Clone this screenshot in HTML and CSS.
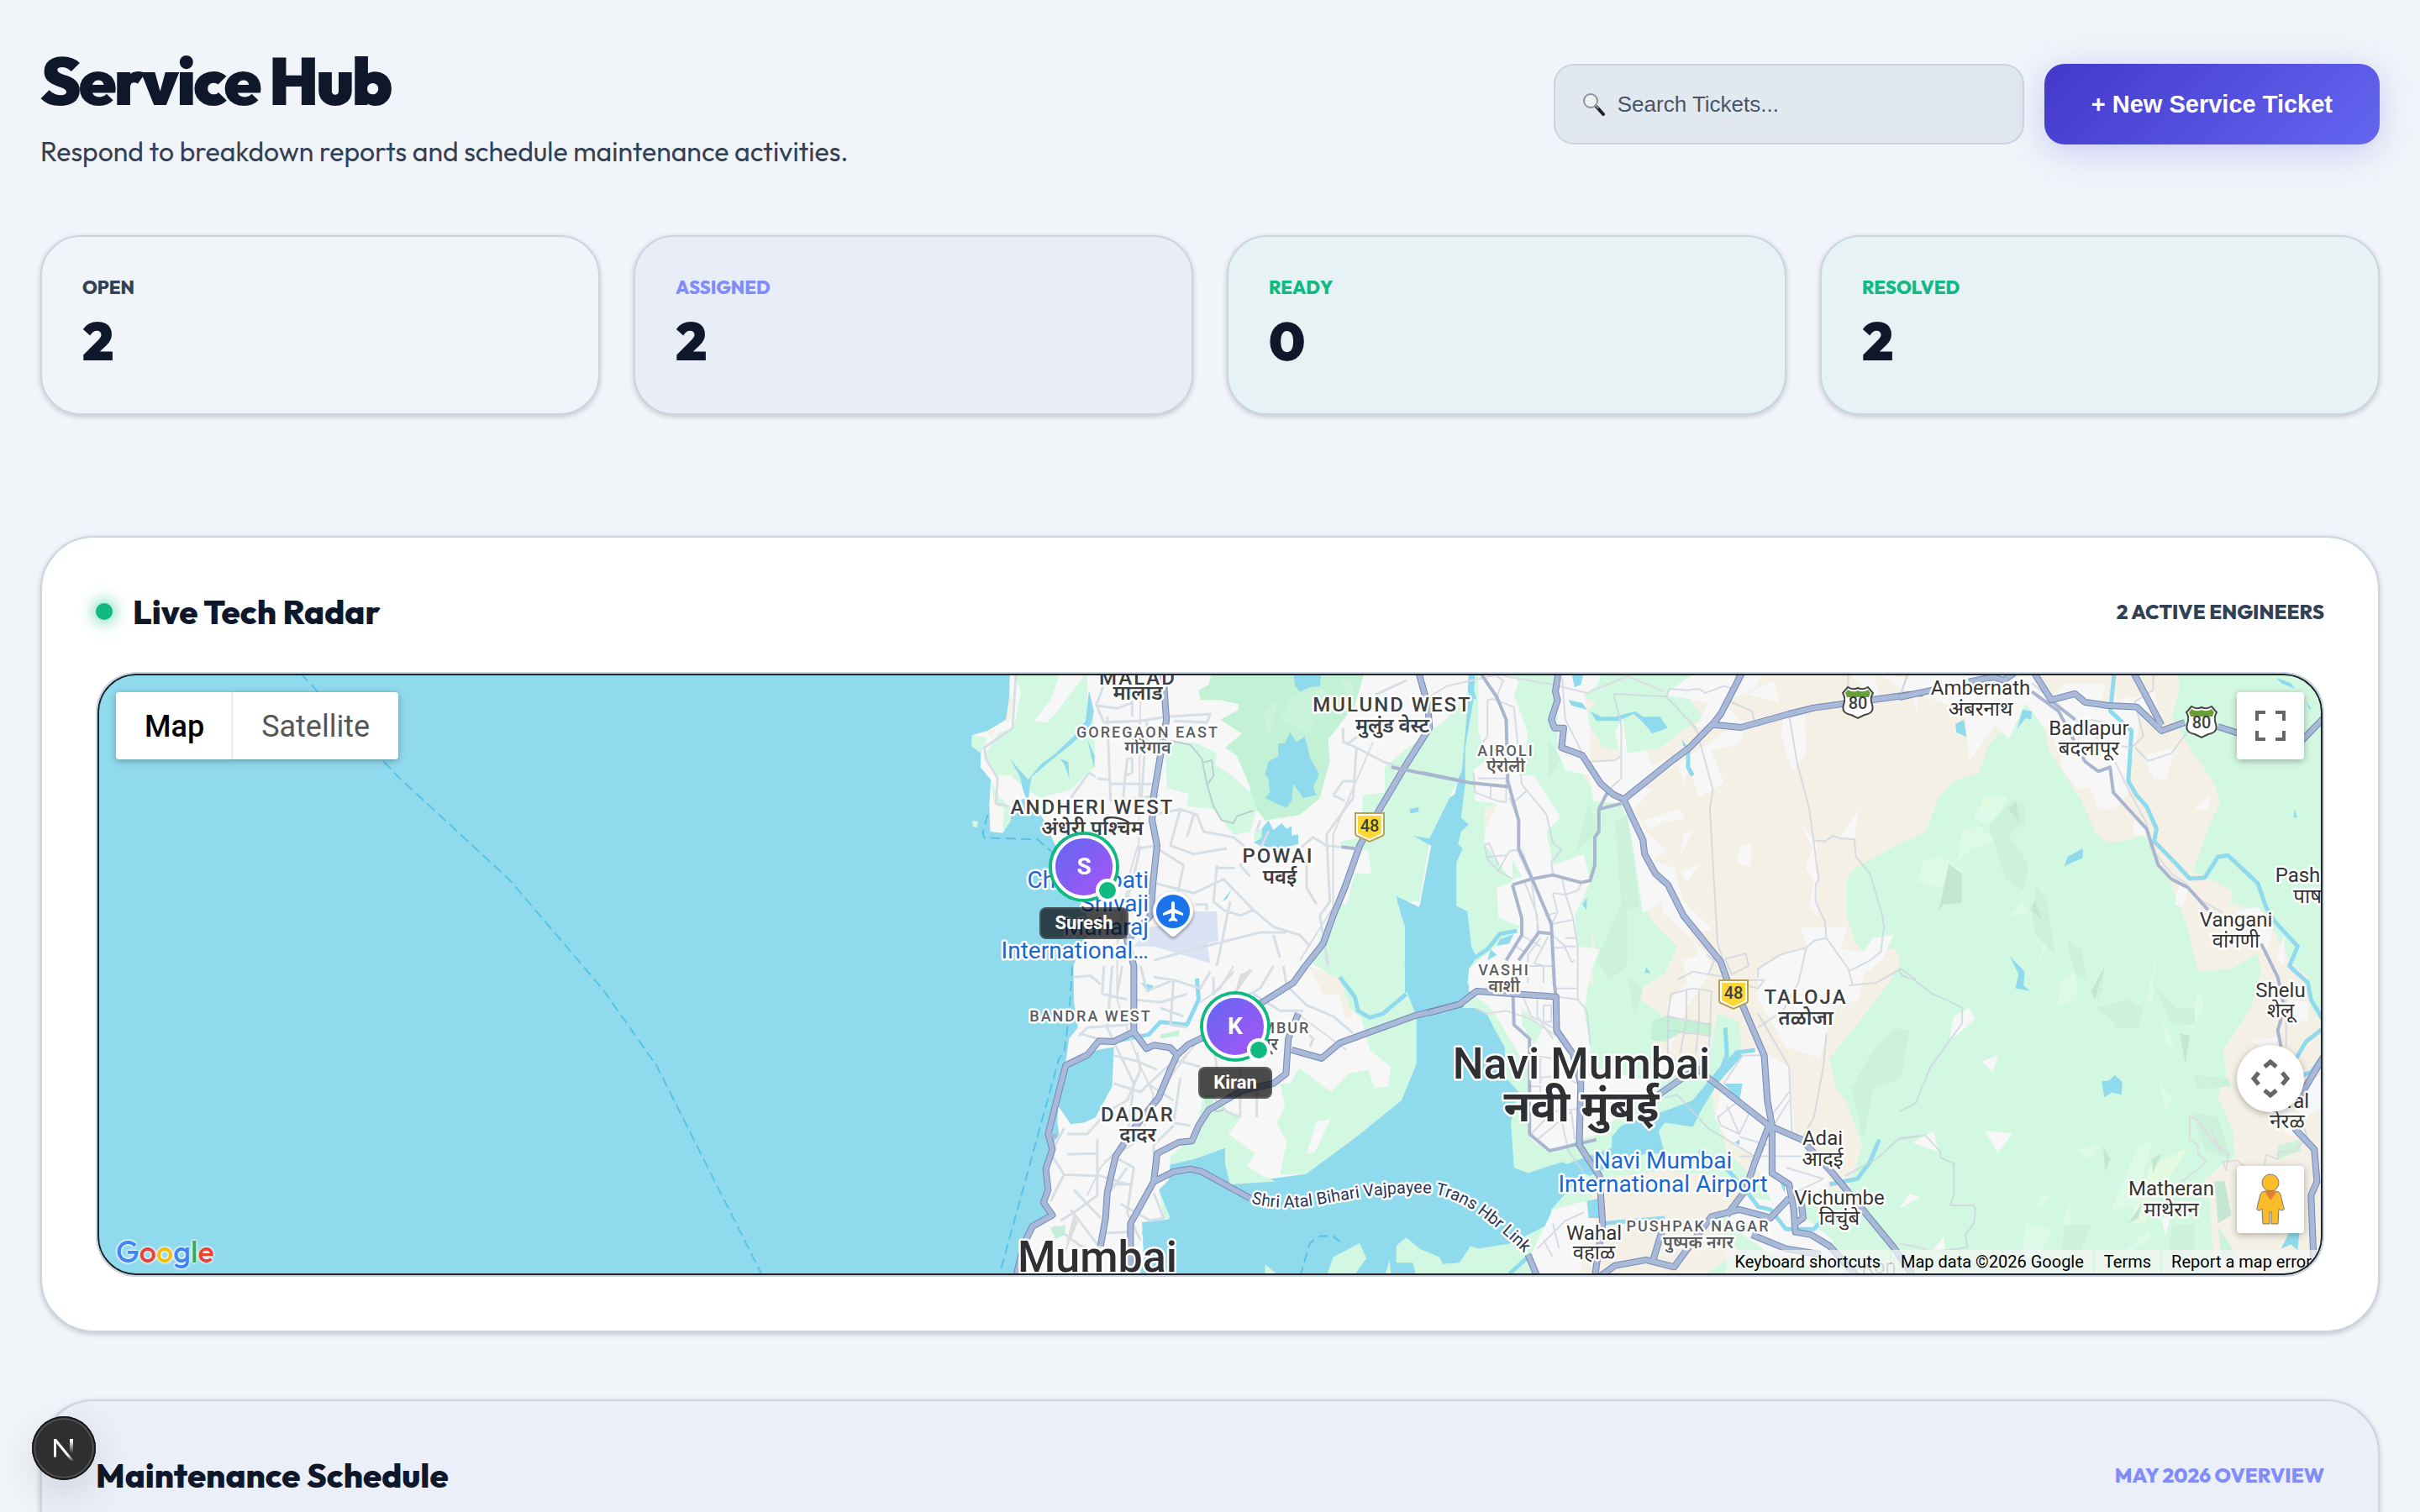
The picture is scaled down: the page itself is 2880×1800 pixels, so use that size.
FILE: index.html
```html
<!DOCTYPE html>
<html lang="en">
<head>
<meta charset="utf-8">
<meta name="viewport" content="width=device-width, initial-scale=1">
<title>Service Hub</title>
<link rel="stylesheet" href="styles.css">
</head>
<body>
<main class="page">
  <header class="page-header">
    <div class="intro">
      <h1 class="page-title">Service Hub</h1>
      <p class="page-subtitle">Respond to breakdown reports and schedule maintenance activities.</p>
    </div>
    <div class="actions">
      <label class="search">
        <svg class="search-icon" viewBox="0 0 28 28" aria-hidden="true">
          <path d="M17 17l8 9" stroke="#222" stroke-width="4" stroke-linecap="round"/>
          <path d="M15 14l4 5" stroke="#9aa3ab" stroke-width="2"/>
          <circle cx="10" cy="10" r="8" fill="#eef0f2" stroke="#8b949c" stroke-width="2"/>
        </svg>
        <input class="search-input" type="text" placeholder="Search Tickets..." aria-label="Search Tickets">
      </label>
      <button class="primary-button" type="button">+ New Service Ticket</button>
    </div>
  </header>

  <section class="stats" aria-label="Ticket totals">
    <article class="stat"><h2 class="stat-label">OPEN</h2><p class="stat-value">2</p></article>
    <article class="stat stat-indigo"><h2 class="stat-label">ASSIGNED</h2><p class="stat-value">2</p></article>
    <article class="stat stat-green"><h2 class="stat-label">READY</h2><p class="stat-value">0</p></article>
    <article class="stat stat-green"><h2 class="stat-label">RESOLVED</h2><p class="stat-value">2</p></article>
  </section>

  <section class="panel">
    <div class="panel-header">
      <h2 class="panel-title"><span class="live-dot"></span>Live Tech Radar</h2>
      <span class="panel-note">2 ACTIVE ENGINEERS</span>
    </div>
    <div class="map">
      <svg class="map-canvas" viewBox="116 802 2648 716" preserveAspectRatio="xMidYMid slice" role="img" aria-label="Map of Mumbai">
        <defs>
          <path id="link-road" d="M1489 1432Q1520 1442 1570 1434Q1640 1420 1690 1420Q1720 1420 1752 1440Q1790 1466 1826 1504"/>
          <g id="shield-nh">
            <path d="M-17-16H17V8Q17 11 13 12L0 18L-13 12Q-17 11-17 8Z" fill="#fff" stroke="#b9a057" stroke-width="2"/>
            <path d="M-14-13H14V8L0 15L-14 8Z" fill="#fdd835"/>
          </g>
          <g id="shield-us">
            <path d="M-12-18Q-6-14 0-17Q6-14 12-18L18-11Q14-5 17 3Q20 13 8 15L0 19L-8 15Q-20 13-17 3Q-14-5-18-11Z" fill="#fff" stroke="#444" stroke-width="2"/>
            <path d="M-12-15Q-6-11 0-14Q6-11 12-15L15-11L13-6H-13L-15-11Z" fill="#689f38"/>
          </g>
        </defs>
        <rect class="water" x="116" y="802" width="2648" height="716"/>
        <path class="ferry" d="M358 802L474 925 606 1047 716 1176 781 1268 907 1518"/>

        <!-- west: Mumbai peninsula -->
        <g transform="matrix(.3954 0 0 .3333 1120 790)">
          <path class="urban" d="M207 30L205 130 195 200 140 240 95 255 92 295 120 320 118 370 150 415 145 500 148 600 185 605 208 560 215 490 270 480 310 560 340 640 370 700 400 800 430 880 450 940 425 1000 398 1080 400 1210 412 1300 385 1340 375 1425 470 1380 520 1370 515 1510 465 1620 430 1640 390 1645 352 1580 350 1640 355 1680 335 1720 330 1770 312 1810 330 1880 305 1930 332 1980 270 2020 240 2080 225 2190 595 2190 610 2130 605 1995 685 1985 655 1880 685 1845 690 1780 760 1770 855 1730 855 1785 870 1860 1098 1823 1250 1690 1385 1560 1430 1430 1430 1260 1405 1195 1403 1175 1395 1175 1395 900 1370 850 1440 870 1470 690 1500 600 1540 500 1555 420 1560 300 1584 120 1588 30Z"/>
          <path class="farm" d="M207 100L215 130 208 200 195 210ZM150 232L162 235 150 262 140 245ZM420 40L440 40 438 100Z"/>
          <path class="park" d="M212 30L240 95 225 200 215 235 175 245 140 310 135 340 165 400 210 400 255 450 300 480 390 450 440 390 465 370 460 200 440 130 440 60 440 30 350 170 320 210 280 205 330 130 360 30Z"/>
          <path class="park" d="M150 415L175 480 205 495 210 560 185 605 190 520 160 500ZM92 255L140 265 120 320 92 295ZM95 560L112 565 108 585 95 582Z"/>
          <path class="urban" d="M175 430L210 400 240 440 255 475 220 485 200 510 178 470Z"/>
          <path class="water" d="M445 95L460 170 450 220 400 280 322 355 272 405 266 450 262 500 246 450 238 405 208 342 262 415 300 360 345 320 400 258 435 205ZM358 340L383 350 386 412 372 362ZM440 270L462 330 460 372 450 320Z"/>
          <path class="forest" d="M815 30L1275 30 1245 150 1165 270 1170 350 1140 480 1080 540 975 560 930 490 930 440 890 330 855 300 905 250 840 200 895 165 895 145 840 130 780 130 775 95 805 75Z"/>
          <path class="park" d="M1060 110L1150 90 1170 130 1100 250 1020 200Z" opacity=".4"/>
          <path class="shade" d="M1015 130L985 270 970 180 910 245ZM1200 50L1245 70 1230 130Z"/>
          <path class="park" d="M690 275L770 285 830 320 825 360 875 400 935 465 950 520 930 600 880 612 820 520 740 510 745 465 680 445 675 330ZM965 590L942 600 942 640 965 620Z"/>
          <path class="water" d="M1050 245L1070 280 1095 260 1110 335 1138 395 1120 440 1130 470 1090 480 1060 430 1055 490 1040 515 1000 495 975 480 990 460 985 410 975 395 985 350 1015 330 1015 285 1035 285ZM985 560L1000 595 1025 570 1040 590 1055 580 1055 615 1075 610 1075 645 1020 660 960 650 942 640 965 620 965 590ZM1060 30L1145 30 1140 80 1110 85 1080 100 1065 80Z"/>
          <path class="park" d="M1395 310L1520 200 1588 100 1568 380 1530 480 1470 640 1440 850 1370 850 1395 900 1395 1175 1403 1175 1430 1260 1430 1430 1385 1560 1250 1690 1098 1823 1020 1825 1040 1710 1010 1640 1035 1580 1020 1500 1050 1500 1078 1445 1175 1530 1225 1465 1285 1450 1305 1515 1345 1510 1353 1440 1290 1380 1265 1270 1220 1220 1200 1150 1140 1085 1118 1075 1145 960 1200 850 1220 865 1245 750 1295 750 1285 670 1205 655 1200 635 1265 620 1270 470 1335 460 1335 370Z"/>
          <path class="park" d="M790 1545L900 1625 865 1680 945 1750 920 1795 970 1830 1005 1850 870 1860 855 1785 855 1730 760 1770 690 1790 690 1760 750 1700 775 1620ZM655 1880L690 1980 670 1985Z"/>
          <path class="farm" d="M1105 1080L1200 1125 1240 1265 1215 1265 1200 1185 1150 1180Z"/>
          <path class="urban" d="M1130 1635L1172 1628 1125 1745 1100 1750Z"/>
          <path class="forest" d="M660 1325L718 1310 715 1330 660 1340ZM328 2015L374 2005 372 2040 345 2055ZM790 1540L830 1545 800 1590Z"/>
          <path class="water" d="M1370 830L1440 870 1475 650 1420 615 1470 625 1530 480 1600 420 1600 1080 1395 1080 1403 960 1385 900ZM1410 520L1438 512 1436 530 1412 535ZM602 1140L640 1150 625 1175ZM605 1995L650 2015 605 2010ZM605 2025L650 2045 605 2040ZM845 850L875 805 860 840Z"/>
          <path class="river" d="M1200 1120L1245 1190 1255 1240 1290 1265 1330 1250 1400 1180M770 1125L775 1200 740 1290 660 1280 625 1325 520 1350"/>
          <path class="airfield" d="M760 885L830 885 835 990 800 1000 810 1070 740 1045 640 1010 580 1010 630 940 720 930Z"/>
          <path class="park" d="M975 2145L1020 2190 975 2190ZM1160 2190L1180 2120 1260 2070 1280 2125 1240 2190ZM1370 2080L1400 2050 1440 2090 1500 2120 1510 2145 1568 2140 1620 2190 1430 2190 1420 2140 1370 2140ZM1350 2130L1355 2190 1335 2190Z"/>

          <path class="street" d="M225 40L215 230 130 300 135 340 170 410 165 500 205 510 M470 140L500 40M465 140L490 210 600 205 680 190 810 180 800 210 700 205M500 190L510 490M575 190L575 60M470 150L530 160 575 140M560 340L575 340 575 390 555 400ZM470 410L505 415M505 430L655 430M510 490L600 480 655 470M555 390L545 520M620 200L600 520M390 480L445 390 465 405M640 540L720 520 770 540 790 600 880 620 940 680 900 720 930 760 M720 520L690 650 760 680 860 660M760 540L740 620M650 660L730 720 710 830M600 650L580 760 530 960M590 660L650 650M630 780L760 820 850 770 940 880M830 720L820 850 850 880M830 730L885 730 M765 860L800 860 800 880M870 850L830 1080M640 1060L760 1020 960 960 1040 960M850 880L900 900 940 880 1000 940 1080 970 1110 1010M960 560L950 600M985 600L945 700M1060 680L1120 620 1160 650 1250 660M1165 1080L1140 900 1170 850 1160 610 1240 480 1250 300M1210 230L1210 280 1250 300 1330 350 1380 370M1220 290L1320 200 1310 110 1400 60M1180 470L1210 420 1245 420M1180 470L1215 490M1100 690L1100 800 1130 860M1000 970L1020 1050"/>
          <path class="street" d="M490 1080L485 1180 560 1200M515 1080L500 1300 580 1500 560 1700M545 1080L530 1180 M400 1120L450 1115 480 1145 M415 1330L440 1300 560 1290 580 1250M415 1320L500 1350 570 1330 M600 1080L620 1170 700 1130 780 1160 810 1100M640 1120L700 1130 M580 1200L660 1210 740 1180M700 1130L690 1290 740 1300M660 1230L730 1260M520 1400L590 1420 650 1450M520 1500L600 1530 680 1440 720 1420 780 1440 M720 1480L700 1640 750 1650M620 1500L700 1560M590 1390L600 1450 560 1560 500 1600 440 1680 380 1680M700 1650L640 1720 640 1850M370 1660L330 1750 370 1825 330 1920M380 1752L470 1750M370 1825L480 1830 560 1860M470 1700L470 1900 400 1960 360 1990M520 1760L580 1800 560 1960 600 2060M390 1950L480 2090M500 1900L560 1800M340 2010L420 2080 490 2110M480 1980L400 1880M500 1860L570 1860M540 1930L630 1990 670 1980 640 1890M480 2035L570 2030M1000 1080L960 1160 900 1200M1030 1080L1040 1150 1100 1220 1180 1260 1240 1320M940 1180L1020 1240 1090 1240 M1060 1270L1120 1340 1110 1370M820 1360L830 1450M900 1440L900 1620M950 1480L950 1620M810 1540L860 1600 900 1620M880 1100L820 1180 820 1120"/>
          <path class="rail" d="M600 60L595 640 570 740 530 1000 530 1200 600 1440 640 1540 600 1700 490 1780M880 1080L840 1160 780 1210 M930 1090L880 1180 700 1460 620 1620 480 1800 440 1900M1300 280L1180 610 1180 870 1080 1060M1060 1240L1220 1380M410 1990L370 2110"/>
          <path class="railyard" d="M900 1110L940 1090 880 1190ZM400 1960L410 2000 375 2080ZM720 1420L745 1380 715 1440Z"/>
          <path class="trail" d="M690 275L750 290 785 340 800 430 820 510 845 560 880 570 890 545 940 525M785 355L815 345 820 400 800 435M805 1580L830 1600 850 1595"/>
          <path class="ferry" d="M140 540L125 605 130 622 290 628 340 680M395 1080L385 1260 370 1390 355 1410 175 2185M1080 2190L1110 2070 1140 2045 1180 2045 1200 2065"/>
          <path class="highway-edge" d="M668 30L678 200 660 330 640 470 635 560 650 650 638 780 630 900 560 990 580 1080 580 1315 520 1350 475 1348 440 1398 375 1435 350 1550 322 1680 335 1735 315 1805 322 1880 308 1925 335 1970 275 2010 250 2070 225 2190M580 1315L618 1375 640 1363 690 1372 710 1398M1437 30L1465 150 1470 230 1400 360 1320 520 1260 650 1215 800 1180 900 1150 1000 1095 1082 1060 1140 980 1200 850 1300 745 1360 710 1398 690 1450 655 1550 580 1660 525 1760 500 1890 495 1980 480 2080M1568 1215L1420 1260 1200 1355 1145 1410 1055 1380M1075 1250L1045 1340 1038 1465 1000 1500 905 1525 805 1595 775 1650 755 1705 715 1710 650 1750 640 1850 570 2000 570 2190M640 1850L700 1815 750 1805 785 1815 930 1910"/>
          <path class="highway" d="M668 30L678 200 660 330 640 470 635 560 650 650 638 780 630 900 560 990 580 1080 580 1315 520 1350 475 1348 440 1398 375 1435 350 1550 322 1680 335 1735 315 1805 322 1880 308 1925 335 1970 275 2010 250 2070 225 2190M580 1315L618 1375 640 1363 690 1372 710 1398M1437 30L1465 150 1470 230 1400 360 1320 520 1260 650 1215 800 1180 900 1150 1000 1095 1082 1060 1140 980 1200 850 1300 745 1360 710 1398 690 1450 655 1550 580 1660 525 1760 500 1890 495 1980 480 2080M1568 1215L1420 1260 1200 1355 1145 1410 1055 1380M1075 1250L1045 1340 1038 1465 1000 1500 905 1525 805 1595 775 1650 755 1705 715 1710 650 1750 640 1850 570 2000 570 2190M640 1850L700 1815 750 1805 785 1815 930 1910"/>
          <path class="avenue" d="M1355 370L1610 430M1205 655L1255 662M320 1680L350 1690"/>
        </g>

        <!-- centre: Navi Mumbai and the Taloja plain -->
        <g transform="matrix(.37 0 0 .3333 1700 790)">
          <path class="park" d="M150 30L145 130 118 300 118 430 105 550 130 575 105 600 95 645 110 660 90 710 90 865 125 885 138 1010 155 1050 130 1090 125 1145 150 1165 110 1230 150 1230 190 1255 210 1300 245 1370 250 1480 290 1530 265 1640 275 1800 320 1820 430 1780 500 1820 395 1950 390 2000 270 2070 160 2090 135 2080 100 2140 40 2145 0 2120 -40 2190 2900 2190 2900 30Z"/>
          <path class="farm" d="M520 30L1990 30 1930 135 1802 290 1770 390 1690 420 1640 480 1600 600 1513 645 1370 730 1345 770 1345 900 1370 990 1395 1025 1500 1020 1520 1060 1480 1140 1370 1300 1290 1410 1310 1510 1350 1580 1395 1720 1350 1880 1100 1900 960 1740 920 1600 900 1480 1010 1420 1000 1280 930 1250 900 1420 740 1400 715 1340 750 1250 650 1180 760 1110 800 1010 720 920 690 860 650 600 620 500 540 480 480 360 430 250Z"/>
          <path class="farm" d="M540 1840L760 1810 1000 1840 1050 1960 900 1980 1000 2100 880 2190 370 2190 390 2020 520 1920ZM540 1020L500 1100 530 1160 525 960ZM180 520L220 500 225 590 180 640ZM300 600L380 590 360 660 310 650ZM380 720L480 700 440 760 370 755Z"/>
          <path class="park" d="M560 30L860 30 820 100 885 195 815 240 740 305 685 310 690 370 660 375 655 320 560 300 500 180 540 140 500 120Z"/>
          <path class="urban" d="M160 30L270 30 290 70 275 110 320 250 300 400 340 400 425 550 380 600 400 720 500 680 520 780 470 900 480 1010 550 1020 520 1110 500 1240 520 1350 520 1440 740 1500 650 1560 560 1680 480 1700 400 1750 330 1700 320 1450 240 1300 200 1230 130 1170 130 1090 215 1010 295 940 225 905 220 800 270 780 180 640 185 590 220 500 150 490 145 380 190 340 160 240Z"/>
          <path class="park" d="M300 640L330 760 310 740ZM270 700L300 760 270 770ZM300 1230L370 1300 340 1360 300 1290Z"/>
          <path class="urban" d="M415 30L560 30 540 80 500 110 520 230 520 350 620 340 600 240 625 200 640 320 700 310 720 365 780 330 800 360 825 430 835 350 870 480 950 425 910 310 1000 290 1020 220 930 215 860 230 900 140 760 110 860 30 1080 30 1050 90 950 140 1010 210 1050 215 960 240 690 440 720 450 660 520 700 600 770 670 720 700 790 730 820 850 915 950 840 960 870 1040 820 1060 830 1140 770 1210 780 1300 760 1480 690 1480 760 1420 830 1230 910 1100 900 1040 755 890 750 850 690 890 650 600 620 500 530 490 520 400 440 380 415 310Z"/>
          <path class="urban" d="M690 560L805 520 825 555 760 565 710 595ZM810 690L820 610 850 598ZM810 745L880 710 830 780ZM990 715L1000 655 1040 640 1037 722ZM1025 110L1130 140 1110 60ZM1140 200L1210 180 1215 320 1170 385 1135 260ZM1195 570L1250 640 1250 900 1265 920 1225 870 1240 780 1215 730 1235 660ZM1325 615L1385 520 1370 625ZM1195 945L1350 940 1325 1020 1400 1030 1430 980 1495 968 1460 1060 1400 1110 1385 1200 1300 1230 1260 1410 1150 1370 1060 1200 1060 1090 1160 1030 1220 1010ZM1440 30L1560 60 1600 110 1520 90ZM1350 30L1420 110 1450 110 1430 30Z"/>
          <path class="urban" d="M960 1410L1060 1380 1160 1440 1180 1700 1270 1760 1290 1850 1170 1960 1120 1960 1040 1760 960 1700 920 1620 950 1500ZM400 1950L500 1920 540 2000 480 2190 350 2190 330 2110ZM1000 1900L1160 1930 1300 2060 1340 2190 1100 2110 960 2000Z"/>
          <path class="forest" d="M720 1275L770 1255 815 1275 910 1285 910 1325 820 1315 760 1350 715 1345Z"/>
          <path class="shade" d="M515 490L545 600 475 675ZM600 560L640 540 680 870 640 880 640 1080 580 1130 540 1060 620 860ZM640 1120L690 1160 665 1270ZM385 270L425 340 385 420ZM1430 1380L1500 1300 1545 1320 1520 1480 1430 1520 1400 1700 1360 1520Z"/>
          <path class="water" d="M450 130L495 140 510 165 460 150ZM460 30L500 30 490 75 470 85ZM520 170L555 190 600 190 665 170 690 190 745 190 770 230 720 250 690 210 660 180 610 205 540 205ZM495 860L510 835 508 880ZM815 270L835 300 820 295ZM700 1085L715 1105 695 1105ZM230 985L275 965 260 1000 220 1008ZM200 1020L220 1040 190 1060ZM130 30L155 130 140 120ZM950 1500L1010 1500 1000 1560ZM985 1710L1000 1700 1000 1720ZM1130 1850L1150 1850 1145 1890ZM510 1920L550 1910 550 1980 515 1980Z"/>
          <path class="water" d="M500 1765L590 1730 590 1690 620 1650 700 1620 780 1590 850 1560 930 1450 990 1380 1010 1400 930 1500 880 1590 850 1655 760 1640 740 1670 760 1750 700 1750 590 1790 520 1830 440 1790Z"/>
          <path class="river" d="M150 1050L190 1020 230 965 285 955M955 1300L960 1400 930 1480M990 1390L1050 1380M835 300L835 370 850 400M870 1740L940 1780 1020 1880 1060 1940 1100 1950 1150 2020 1240 2020 1290 1960M1450 1700L1420 1780 1380 1840 1290 1860M560 2000L760 1980M330 2110L260 2180"/>
          <path class="lane" d="M215 40L240 60 215 130 275 155 290 320 300 430 380 540 400 640 428 665 395 710 400 750M190 130L190 260 175 280M190 130L220 125M145 390L150 460 220 490 250 495 250 410M160 410L260 410M200 430L200 480M180 650L190 700 225 740 270 770M180 650L195 640 225 720M190 690L250 685M225 740L260 670 285 665 330 770M280 490L310 460 320 450M260 480L290 560M430 50L440 200 495 320M595 108L765 118 860 230 915 450 905 520 930 1000 950 1070M595 108L620 220 620 410 580 450M520 350L600 345 620 330M765 118L775 90 830 95 870 90 890 105 950 80 980 90 990 40M970 135L1040 170 1050 210M1160 185L1185 350 1225 520 1255 770 1245 790 1245 850 1275 920 1280 980 1350 1090 1365 1150M1235 630L1275 635 1300 615 1325 625 1370 628 1375 690 1420 750 1460 900 1465 940 1455 1030 1420 1060 1350 1100M1280 980L1240 990 1215 1015 1130 1040 1060 1090 1060 1120M1215 1015L1190 1140 1140 1240 1060 1300M1350 30L1350 90M1540 40L1520 110"/>
          <path class="lane" d="M330 770L355 960M310 780L350 900 350 960M430 770L440 820 465 910 480 1010 480 1200 510 1240 520 1360M400 820L440 825 480 810 490 790M400 820L415 890 395 930 465 915M375 900L410 890M400 970L440 1010 475 1010M440 980L475 980M360 980L320 1040 320 1140M385 975L340 1070 370 1080 370 1140M300 970L360 1010M280 1010L310 1030M405 1015L440 1015 460 1065 470 1060M320 1080L405 1080M410 1160L480 1160M415 1190L480 1200M370 1220L395 1220 395 1280 370 1280ZM350 1200L350 1260 400 1340M340 1400L400 1410M360 1480L420 1470M360 1410L360 1500M440 1480L480 1500M320 1510L360 1510 360 1570M330 1680L400 1600 480 1590M350 1700L460 1600 470 1700M430 1640L450 1740 500 1820M780 1180L770 1260 770 1480M780 1180L850 1160 910 1170 900 1440 830 1470M830 1160L830 1270 810 1390M870 1160L870 1270 860 1390M770 1260L910 1290M770 1310L910 1330M800 1130L850 1100 900 1110M895 1040L920 1060 900 1110 960 1120M955 1055L1020 1035 1030 1080 975 1110ZM1030 1130L1080 1130 1060 1160 1020 1150M1060 1250L1160 1440 1170 1700M1010 1400L1080 1400M1010 1400L950 1500M1160 1530L1100 1620M1160 1560L1110 1650M930 1620L1000 1560 1030 1610 1000 1680 940 1650ZM960 1580L1000 1680M1000 1690L1090 1720M1000 1760L1200 1760M1150 1800L1270 1840 1180 1890M1280 1320L1270 1440 1240 1620 1200 1700M1350 1150L1440 1140 1520 1090 1568 1130M1568 1690L1510 1700 1440 1770 1340 1830M760 1550L800 1540 900 1660 1050 1760 1160 1760M350 2090L440 1990 500 1960M370 2060L400 2120M400 2000L420 2090"/>
          <path class="rail" d="M0 120L60 80 220 40 400 75 510 105 640 45 760 100M860 240L830 190M150 1230L190 1250 250 1240 330 1270 410 1330M290 1150L330 1260 400 1300"/>
          <path class="avenue" d="M165 30L220 120 250 200 255 420 290 560 290 660 330 760 395 930 405 1145 410 1190M-20 390L130 425 262 440M270 790L330 770 400 755 490 782 520 775 535 720 535 620 548 600 548 520 620 500M580 450L548 520M270 790L300 910 300 970 250 1060M400 965L355 960 290 1060M272 1190L275 1290 325 1340 325 1680 390 1740 540 1700"/>
          <path class="highway-edge" d="M418 30L408 100 415 130 395 200 405 230 435 230 428 300 495 328 555 430 595 468 628 485 690 630 695 680 730 750 770 790 820 900 940 1065 965 1145 1010 1220 1080 1400 1090 1560 1105 1650 1105 1820 1160 1860 1175 1950 1180 2030 1230 2040 1290 2080 1380 2190M628 485L780 350 840 300 915 215 940 180 1010 30M915 218L1005 228 1160 180 1240 158 1620 100M0 1248L100 1217 155 1170 410 1190 412 1310 465 1395 490 1500 485 1720 550 1830 560 2000 535 2190M740 1540L830 1470 870 1450 900 1480 1095 1650 1200 1700 1300 1820 1500 2090 1560 2190M1095 1650L1050 1780 1020 1880 960 1970M550 2190L600 2150 700 2130 790 2155 840 2080 910 1975 1000 1950 1100 1980 1160 1910M720 2140L750 2030M1040 2040L1150 2090 1260 2110M1200 1930L1205 1980 1180 2000M320 2110L350 2190"/>
          <path class="highway" d="M418 30L408 100 415 130 395 200 405 230 435 230 428 300 495 328 555 430 595 468 628 485 690 630 695 680 730 750 770 790 820 900 940 1065 965 1145 1010 1220 1080 1400 1090 1560 1105 1650 1105 1820 1160 1860 1175 1950 1180 2030 1230 2040 1290 2080 1380 2190M628 485L780 350 840 300 915 215 940 180 1010 30M915 218L1005 228 1160 180 1240 158 1620 100M0 1248L100 1217 155 1170 410 1190 412 1310 465 1395 490 1500 485 1720 550 1830 560 2000 535 2190M740 1540L830 1470 870 1450 900 1480 1095 1650 1200 1700 1300 1820 1500 2090 1560 2190M1095 1650L1050 1780 1020 1880 960 1970M550 2190L600 2150 700 2130 790 2155 840 2080 910 1975 1000 1950 1100 1980 1160 1910M720 2140L750 2030M1040 2040L1150 2090 1260 2110M1200 1930L1205 1980 1180 2000M320 2110L350 2190"/>
        </g>

        <!-- east: Badlapur to Neral and the hills -->
        <g transform="matrix(.3954 0 0 .3333 2260 680)">
          <path class="farm" d="M300 360L840 360 845 420 820 520 880 640 950 760 965 830 930 920 885 1070 1005 1140 995 1185 1100 1220 1180 1400 1290 1370 1290 2520 950 2520 935 2250 920 2170 1010 2090 1005 2000 960 1880 985 1790 975 1710 1060 1560 1090 1430 1080 1365 1000 1420 900 1430 865 1260 815 1110 740 940 670 965 625 970 590 930 550 820 450 640 440 570 390 470Z"/>
          <path class="park" d="M1180 1400L1270 1370 1290 1480 1290 1640 1240 1560 1230 1450Z"/>
          <path class="urban" d="M30 370L210 370 350 380 410 370 460 450 500 400 620 405 610 470 700 450 770 430 780 500 720 500 720 560 690 740 690 790 650 850 600 850 575 770 540 780 485 700 490 640 380 470 330 600 290 550 210 680 200 500 60 440 55 500 40 450ZM735 660L830 630 805 745 765 740ZM885 855L935 797 935 850ZM710 890L745 910 745 948 703 938ZM830 1190L845 1110 875 1110 855 1200ZM1010 1210L1085 1200 1125 1290 1100 1370ZM1135 1380L1160 1300 1160 1410ZM1170 1530L1230 1540 1230 1610 1190 1600ZM1060 1680L1150 1660 1120 1710ZM1210 1840L1270 1800 1270 1920 1200 1960ZM1090 1900L1150 1880 1220 2000 1180 2020Z"/>
          <path class="urban" d="M150 1680L165 1590 210 1560 230 1600ZM250 1750L298 1730 282 1790ZM258 1998L340 2008 298 2078ZM40 2040L105 2000 118 2075ZM0 2278L30 2225 65 2235ZM790 2310L818 2300 802 2375ZM100 2430L135 2375 138 2420ZM115 1020L133 1060 118 1115Z"/>
          <path class="tint" d="M225 880L260 800 325 805 300 880 260 905ZM175 1040L190 925 240 910 285 960 210 1000ZM55 1110L75 1030 130 1020 190 1070 120 1130ZM335 1230L368 1180 390 1220ZM420 1390L435 1330 460 1330ZM475 1550L490 1460 530 1430 540 1530ZM745 1530L775 1370 760 1540ZM785 1590L830 1690 810 1700ZM860 1620L905 1500 915 1560 880 1640ZM785 1830L820 1880 800 1930ZM640 2280L720 2050 760 2040 710 2270ZM535 2070L605 2048 580 2100ZM410 2280L430 2220 455 2240ZM370 2460L380 2330 460 2350 420 2450ZM490 2330L515 2250 518 2340ZM660 2450L755 2350 755 2390Z"/>
          <path class="sun" d="M690 2330L760 2120 870 2060 800 2190 740 2330ZM240 860L255 810 280 820Z"/>
          <path class="shade" d="M270 905L340 820 380 830 380 900 330 940 390 1050 375 1140 320 1100ZM400 1230L415 1120 445 1180 470 1370 410 1300ZM505 1315L550 1350 565 1460 530 1440ZM590 1560L620 1400 610 1500ZM770 1480L830 1560 890 1560 890 1620 820 1620ZM590 1560L690 1530 735 1560 720 1630 655 1635 640 1600ZM0 1640L30 1640 10 1770ZM885 1800L990 1810 1000 1840 900 1850ZM880 1930L960 1950 1000 2100 920 2070ZM820 2340L890 2330 890 2450 810 2450ZM500 2335L580 2335 540 2440 490 2420ZM1140 2050L1210 2030 1210 2070 1140 2100ZM960 2340L1020 2450 970 2460Z"/>
          <path class="ridge" d="M120 1210L150 1045 190 1080 188 1185 135 1190ZM330 850L352 820 362 900ZM395 1210L410 1175 430 1245ZM578 1500L620 1410 590 1530ZM845 1650L875 1660 862 1760ZM615 2055L637 2100 620 2145ZM760 2100L790 2080 765 2150ZM690 2330L735 2250 720 2310ZM950 2180L980 2180 1000 2300 960 2330Z"/>
          <path class="water" d="M170 545L195 530 203 592 172 575ZM355 565L372 495 400 500 398 530 380 525ZM497 1055L507 1020 553 990 553 1025 520 1040ZM333 1375L378 1430 375 1480 395 1500 350 1490 360 1440ZM610 1822L632 1820 650 1800 672 1825 670 1870 640 1862 618 1880ZM1135 380L1180 400 1192 420 1150 400ZM1187 880L1192 848 1198 880ZM1150 2420L1175 2360 1205 2360 1200 2425 1180 2405ZM1225 465L1235 495 1260 460 1240 490Z"/>
          <path class="river" d="M648 360L636 500 700 570 690 750 715 800 745 840 775 920 768 965 830 1040 875 1098 920 1095 960 1020 990 1015 1080 1115 1105 1200 1130 1250 1200 1340 1175 1410 1230 1470 1240 1530 1275 1600M1280 1630L1225 1680 1195 1740M1270 1740L1240 1790 1215 1800"/>
          <path class="lane" d="M25 370L5 440M765 370L765 425 710 465 735 590 700 630 670 625M870 570L820 650 750 678 710 630M400 400L520 520M575 530L620 540M480 480L600 600M0 1425L10 1445 45 1460 100 1510 140 1530 190 1560 190 1615 150 1680 95 1770 50 1900 0 1930M0 2025L80 2015 125 2075 125 2095 165 2115 165 2225 155 2265 225 2265 230 2280 225 2330 200 2370 205 2415 115 2430M1165 1500L1165 1700M1220 1990L1240 2060 1260 2130"/>
          <path class="rail" d="M650 680L690 780 745 900 760 990 820 1080 870 1120M900 1170L975 1220M875 1945L900 1960 940 2030 990 2080 985 2140 975 2110 1020 2105 1040 2130M875 1945L875 2030 900 2050 900 2080 925 2110 890 2145 845 2185M940 1995L970 2080M1100 2120L1105 2085 1140 2100 1140 2075 1190 2070 1215 2040M0 2400L60 2415 100 2430"/>
          <path class="avenue" d="M400 430L480 500 560 680 600 715 635 700 645 790 745 920 780 1050 820 1100 870 1130 930 1210M460 465L530 530M1090 1330L1140 1450 1160 1560 1140 1640 1150 1700"/>
          <path class="highway-edge" d="M0 450L100 425M210 395L285 378 315 390 350 360M405 360L458 460 530 438 560 468 630 480 715 485 790 570 860 540M705 360L790 550M960 555L1030 582M1200 620L1290 510M1290 1710L1210 1870M1190 1990L1250 2065 1258 2180 1240 2230 1250 2520"/>
          <path class="highway" d="M0 450L100 425M210 395L285 378 315 390 350 360M405 360L458 460 530 438 560 468 630 480 715 485 790 570 860 540M705 360L790 550M960 555L1030 582M1200 620L1290 510M1290 1710L1210 1870M1190 1990L1250 2065 1258 2180 1240 2230 1250 2520"/>
        </g>

        <use href="#shield-nh" x="1630" y="984"/><text class="route" x="1630" y="990">48</text>
        <use href="#shield-nh" x="2063" y="1183"/><text class="route" x="2063" y="1189">48</text>
        <use href="#shield-us" x="2211" y="836"/><text class="route" x="2211" y="844">80</text>
        <use href="#shield-us" x="2620" y="859"/><text class="route" x="2620" y="867">80</text>

        <g class="district">
          <text class="deva" x="1354" y="833">मालाड</text><text x="1354" y="815">MALAD</text>
          <text class="deva" x="1657" y="872">मुलुंड वेस्ट</text><text x="1657" y="847">MULUND WEST</text>
          <text class="deva" x="1300" y="994">अंधेरी पश्चिम</text><text x="1300" y="969">ANDHERI WEST</text>
          <text class="deva" x="1523" y="1052">पवई</text><text x="1521" y="1027">POWAI</text>
          <text class="deva" x="1354" y="1359">दादर</text><text x="1354" y="1335">DADAR</text>
          <text class="deva" x="2149" y="1220">तळोजा</text><text x="2149" y="1195">TALOJA</text>
        </g>
        <g class="locality">
          <text class="deva" x="1366" y="897">गोरेगाव</text><text x="1366" y="878">GOREGAON EAST</text>
          <text x="1298" y="1216">BANDRA WEST</text>
          <text class="deva" x="1504" y="1250">चेंबूर</text><text x="1510" y="1230">CHEMBUR</text>
          <text class="deva" x="1792" y="919">ऐरोली</text><text x="1792" y="900">AIROLI</text>
          <text class="deva" x="1790" y="1181">वाशी</text><text x="1790" y="1161">VASHI</text>
          <text class="deva" x="2021" y="1486">पुष्पक नगर</text><text x="2021" y="1466">PUSHPAK NAGAR</text>
        </g>
        <g class="town">
          <text x="2357" y="852">अंबरनाथ</text><text x="2357" y="827">Ambernath</text>
          <text x="2486" y="899">बदलापूर</text><text x="2486" y="875">Badlapur</text>
          <text x="2758" y="1075">पाषाणे</text><text x="2754" y="1050">Pashane</text>
          <text x="2661" y="1128">वांगणी</text><text x="2661" y="1103">Vangani</text>
          <text x="2714" y="1211">शेलू</text><text x="2714" y="1187">Shelu</text>
          <text x="2722" y="1343">नेरळ</text><text x="2720" y="1319">Neral</text>
          <text x="2584" y="1448">माथेरान</text><text x="2584" y="1423">Matheran</text>
          <text x="2169" y="1388">आदई</text><text x="2169" y="1363">Adai</text>
          <text x="2189" y="1458">विचुंबे</text><text x="2189" y="1434">Vichumbe</text>
          <text x="1897" y="1499">वहाळ</text><text x="1897" y="1476">Wahal</text>
          <text x="2236" y="1516" opacity=".5">Kon</text>
        </g>
        <g class="city">
          <text x="1306" y="1514">Mumbai</text>
          <text class="deva" x="1882" y="1335">नवी मुंबई</text><text x="1882" y="1284">Navi Mumbai</text>
        </g>
        <g class="airport">
          <text x="1979" y="1391">Navi Mumbai</text><text x="1979" y="1419">International Airport</text>
          <g class="align-end">
            <text x="1367" y="1057">Chhatrapati</text><text x="1367" y="1085">Shivaji</text>
            <text x="1367" y="1113">Maharaj</text><text x="1367" y="1141">International…</text>
          </g>
        </g>
        <text class="road-name"><textPath href="#link-road">Shri Atal Bihari Vajpayee Trans Hbr Link</textPath></text>

        <path class="pin" d="M1396 1061A24 24 0 0 1 1420 1085Q1420 1094 1411 1103L1400 1113Q1396 1117 1392 1113L1381 1103Q1372 1094 1372 1085A24 24 0 0 1 1396 1061Z"/>
        <circle cx="1396" cy="1085" r="20" fill="#1a73e8"/>
        <path d="M1396 1073Q1398 1073 1398 1076V1082L1408 1087V1090L1398 1087V1092L1401 1095V1097L1396 1096L1391 1097V1095L1394 1092V1087L1384 1090V1087L1394 1082V1076Q1394 1073 1396 1073Z" fill="#fff"/>
      </svg>

      <div class="engineer engineer-suresh"><div class="avatar">S<span class="status"></span></div><span class="name-tag">Suresh</span></div>
      <div class="engineer engineer-kiran"><div class="avatar">K<span class="status"></span></div><span class="name-tag">Kiran</span></div>

      <div class="map-types">
        <button class="map-type map-type-active" type="button">Map</button>
        <button class="map-type" type="button">Satellite</button>
      </div>
      <button class="map-control control-fullscreen" type="button" aria-label="Toggle fullscreen view">
        <svg viewBox="0 0 36 36" width="36" height="36" aria-hidden="true"><path d="M2 12V2H12M24 2H34V12M34 24V34H24M12 34H2V24" fill="none" stroke="#666" stroke-width="4"/></svg>
      </button>
      <button class="map-control control-camera" type="button" aria-label="Map camera controls">
        <svg viewBox="0 0 46 46" width="46" height="46" aria-hidden="true"><path d="M16 9L23 3L30 9M16 37L23 43L30 37M9 16L3 23L9 30M37 16L43 23L37 30" fill="none" stroke="#666" stroke-width="5"/></svg>
      </button>
      <button class="map-control control-pegman" type="button" aria-label="Street View">
        <svg viewBox="0 0 36 62" width="36" height="62" aria-hidden="true">
          <path d="M12 21H24Q29 21 30 25L34 41Q35 44 31 44L28 42L27 60H19V46H17V60H9L8 42L5 44Q1 44 2 41L6 25Q7 21 12 21Z" fill="#fbbc2c" stroke="#777" stroke-width="1"/>
          <path d="M11 21H26L18 32Z" fill="#e08030"/>
          <circle cx="18" cy="11" r="10" fill="#fbbc2c" stroke="#777" stroke-width="1"/>
        </svg>
      </button>
      <a class="google" href="#google" aria-label="Google"><span class="g-blue">G</span><span class="g-red">o</span><span class="g-yellow">o</span><span class="g-blue">g</span><span class="g-green">l</span><span class="g-red">e</span></a>
      <div class="attribution">
        <button class="credit" type="button">Keyboard shortcuts</button>
        <span class="credit">Map data ©2026 Google</span>
        <a class="credit" href="#terms">Terms</a>
        <a class="credit" href="#report">Report a map error</a>
      </div>
      <div class="map-ring"></div>
    </div>
  </section>

  <section class="panel panel-indigo">
    <div class="panel-header">
      <h2 class="panel-title">Maintenance Schedule</h2>
      <span class="panel-note">MAY 2026 OVERVIEW</span>
    </div>
  </section>
</main>

<button class="dev-badge" type="button" aria-label="Open developer tools">
  <svg viewBox="0 0 76 76" width="76" height="76" aria-hidden="true">
    <defs>
      <linearGradient id="fade-diagonal" x1="0" y1="0" x2="0" y2="1"><stop offset=".7" stop-color="#fff"/><stop offset="1" stop-color="#fff" stop-opacity="0"/></linearGradient>
      <linearGradient id="fade-stem" x1="0" y1="0" x2="0" y2="1"><stop offset=".1" stop-color="#fff"/><stop offset="1" stop-color="#fff" stop-opacity="0"/></linearGradient>
    </defs>
    <path d="M26 49V27H29L50 53L47 54L29 32V49Z" fill="url(#fade-diagonal)"/>
    <rect x="45" y="27" width="4" height="17" fill="url(#fade-stem)"/>
  </svg>
</button>
</body>
</html>
```

FILE: styles.css
```css
* { box-sizing: border-box; }

html { overflow: hidden; }

body {
  margin: 0;
  min-height: 100vh;
  background: #f1f5f9;
  color: #0f172a;
  font-family: Outfit, Lato, "Open Sans", sans-serif;
}

h1, h2, p { margin: 0; }
button { border: 0; padding: 0; cursor: pointer; }

.page { height: 100vh; padding: 48px; overflow: hidden; }

/* Header */
.page-header {
  display: flex;
  align-items: center;
  justify-content: space-between;
  gap: 48px;
  margin-bottom: 80px;
}
.page-title { margin-bottom: 16px; font-size: 80px; font-weight: 900; letter-spacing: -3px; line-height: 96px; }
.page-subtitle { color: #334155; font-size: 32px; line-height: 40px; }

.actions { display: flex; gap: 24px; }
.search {
  display: flex;
  align-items: center;
  gap: 14px;
  width: 560px;
  height: 96px;
  padding: 0 32px;
  border: 2px solid #cbd5e1;
  border-radius: 24px;
  background: #e2e8f0;
}
.search-icon { width: 28px; height: 28px; flex: none; fill: none; }
.search-input {
  flex: 1;
  min-width: 0;
  padding: 0;
  border: 0;
  outline: 0;
  background: transparent;
  color: #0f172a;
  font: 26px "Liberation Sans", Arial, sans-serif;
}
.search-input::placeholder { color: #475569; opacity: 1; }
.primary-button {
  height: 96px;
  padding: 0 56px;
  border-radius: 24px;
  background: linear-gradient(135deg, #4338ca, #6366f1);
  box-shadow: 0 8px 40px rgba(99, 102, 241, .3);
  color: #fff;
  font: bold 29px "Liberation Sans", Arial, sans-serif;
  white-space: nowrap;
}

/* Stats */
.stats {
  display: grid;
  grid-template-columns: repeat(4, 1fr);
  gap: 40px;
  margin-bottom: 144px;
}
.stat {
  height: 214px;
  padding: 46px 48px;
  border: 2px solid #cbd5e1;
  border-radius: 48px;
  box-shadow: 0 2px 6px rgba(0, 0, 0, .2);
}
.stat-label { margin-bottom: 10px; color: #334155; font-size: 22px; font-weight: 800; line-height: 28px; }
.stat-value { font-size: 64px; font-weight: 900; line-height: 80px; }
.stat-indigo { background: #e9edf8; }
.stat-indigo .stat-label { color: #818cf8; }
.stat-green { background: #e6f2f4; }
.stat-green .stat-label { color: #10b981; }

/* Panels */
.panel {
  margin-bottom: 80px;
  padding: 64px;
  border: 2px solid #cbd5e1;
  border-radius: 64px;
  background: #fff;
  box-shadow: 0 2px 6px rgba(0, 0, 0, .2);
}
.panel-indigo { min-height: 400px; background: #ebeff9; }
.panel-header {
  display: flex;
  align-items: center;
  justify-content: space-between;
  margin-bottom: 48px;
}
.panel-title {
  display: flex;
  align-items: center;
  gap: 24px;
  font-size: 40px;
  font-weight: 800;
  line-height: 48px;
}
.panel-note { color: #334155; font-size: 24px; font-weight: 800; line-height: 32px; }
.panel-indigo .panel-note { color: #818cf8; }
.live-dot {
  width: 20px;
  height: 20px;
  border-radius: 50%;
  background: #10b981;
  box-shadow: 0 0 20px #10b981;
}

/* Map */
.map {
  position: relative;
  height: 720px;
  border: 2px solid #cbd5e1;
  border-radius: 48px;
  overflow: hidden;
  font-family: Roboto, "Noto Sans", sans-serif;
}
.map-canvas { display: block; width: 100%; height: 100%; }
.map-canvas path { vector-effect: non-scaling-stroke; }
.map-ring { position: absolute; inset: 0; border: 2px solid #1f2328; border-radius: 46px; pointer-events: none; }

.water { fill: #90daee; }
.urban { fill: #f7f7f7; }
.park { fill: #d3f8e2; }
.forest { fill: #c3f1d5; }
.farm { fill: #f5f0e5; }
.airfield { fill: #dae3f5; }
.tint { fill: #ddfae8; }
.sun { fill: #e3f9e0; }
.shade { fill: #cdf2dc; }
.ridge { fill: #c4e7d3; }
.railyard { fill: #dddde0; }
.river, .ferry, .street, .lane, .rail, .trail, .avenue, .highway, .highway-edge { fill: none; stroke-linejoin: round; }
.river { stroke: #90daee; stroke-width: 5; }
.ferry { stroke: #56c3e4; stroke-width: 2; stroke-dasharray: 12 6; }
.street { stroke: #d6dfe6; stroke-width: 3; }
.lane { stroke: #cdd4e0; stroke-width: 2; stroke-opacity: .8; }
.rail { stroke: #dcdce2; stroke-width: 2; }
.trail { stroke: #bccfd0; stroke-width: 2; }
.avenue { stroke: #aab6cf; stroke-width: 4; }
.highway-edge { stroke: #7687b6; stroke-width: 8; }
.highway { stroke: #a9b9d8; stroke-width: 6; }

.map-canvas text {
  fill: #3c4043;
  stroke: #fff;
  stroke-width: 5;
  stroke-linejoin: round;
  paint-order: stroke;
  text-anchor: middle;
}
.map-canvas .route { font-size: 20px; font-weight: 500; stroke: none; }
.map-canvas .district text { font-size: 24px; font-weight: 500; letter-spacing: 2px; }
.map-canvas .locality text { fill: #5a5d62; font-size: 18px; font-weight: 500; letter-spacing: 2px; }
.map-canvas .town text { fill: #333; font-size: 24px; }
.map-canvas .city text { fill: #2f3034; font-size: 52px; font-weight: 500; }
.map-canvas .airport text { fill: #1967d2; font-size: 28px; }
.map-canvas .district .deva { font-weight: 600; letter-spacing: 0; }
.map-canvas .locality .deva { font-size: 20px; font-weight: 600; letter-spacing: 0; }
.map-canvas .city .deva { font-weight: 700; }
.map-canvas .align-end text { text-anchor: end; }
.map-canvas .road-name { fill: #26335c; font-size: 20px; text-anchor: start; }
.pin { fill: #fff; filter: drop-shadow(0 2px 2px rgba(0, 0, 0, .4)); }

.engineer {
  position: absolute;
  display: flex;
  flex-direction: column;
  align-items: center;
  gap: 10px;
  width: 120px;
}
.engineer-suresh { left: calc(50% - 210px); top: 192px; }
.engineer-kiran { left: calc(50% - 30px); top: 382px; }
.avatar {
  position: relative;
  width: 76px;
  height: 76px;
  border: 4px solid #fff;
  border-radius: 50%;
  background: linear-gradient(135deg, #6366f1, #a855f7);
  box-shadow: 0 0 0 4px #10b981;
  color: #fff;
  font-size: 28px;
  font-weight: 700;
  line-height: 68px;
  text-align: center;
}
.status {
  position: absolute;
  right: -8px;
  bottom: -8px;
  width: 28px;
  height: 28px;
  border: 4px solid #fff;
  border-radius: 50%;
  background: #10b981;
}
.name-tag {
  padding: 0 16px;
  border: 2px solid rgba(255, 255, 255, .1);
  border-radius: 8px;
  background: rgba(0, 0, 0, .7);
  color: #fff;
  font-size: 22px;
  font-weight: 700;
  line-height: 34px;
}

.map-types {
  position: absolute;
  left: 22px;
  top: 22px;
  display: flex;
  border-radius: 4px;
  box-shadow: 0 2px 8px rgba(0, 0, 0, .3);
}
.map-type {
  height: 80px;
  padding: 2px 34px 0;
  border-radius: 0 4px 4px 0;
  background: #fff;
  color: #565656;
  font: 36px Roboto, sans-serif;
}
.map-type + .map-type { box-shadow: -1px 0 2px rgba(0, 0, 0, .15); }
.map-type-active { border-radius: 4px 0 0 4px; color: #000; font-weight: 500; }

.map-control {
  position: absolute;
  right: 22px;
  display: grid;
  place-items: center;
  width: 80px;
  height: 80px;
  border-radius: 4px;
  background: #fff;
  box-shadow: 0 2px 8px rgba(0, 0, 0, .3);
}
.control-fullscreen { top: 22px; }
.control-camera { bottom: 194px; border-radius: 50%; }
.control-pegman { bottom: 50px; }

.google {
  position: absolute;
  left: 22px;
  bottom: 8px;
  font: 500 36px/40px Outfit, Lato, sans-serif;
  text-decoration: none;
  text-shadow: 0 0 3px #fff, 0 0 3px #fff, 0 0 3px #fff;
}
.g-blue { color: #4285f4; }
.g-red { color: #ea4335; }
.g-yellow { color: #fbbc05; }
.g-green { color: #34a853; }

.attribution { position: absolute; right: 2px; bottom: 2px; display: flex; gap: 2px; }
.credit {
  padding: 0 11px;
  background: rgba(245, 245, 245, .7);
  color: #000;
  font: 20px/28px Roboto, sans-serif;
  text-decoration: none;
  white-space: nowrap;
}

/* Floating developer badge */
.dev-badge {
  position: fixed;
  left: 38px;
  bottom: 38px;
  width: 76px;
  height: 76px;
  border-radius: 50%;
  background: #2e2f31;
  box-shadow: inset 0 0 0 2px #171717, inset 0 0 0 4px #505052, 0 16px 48px rgba(0, 0, 0, .12);
}
.dev-badge svg { display: block; }
```
